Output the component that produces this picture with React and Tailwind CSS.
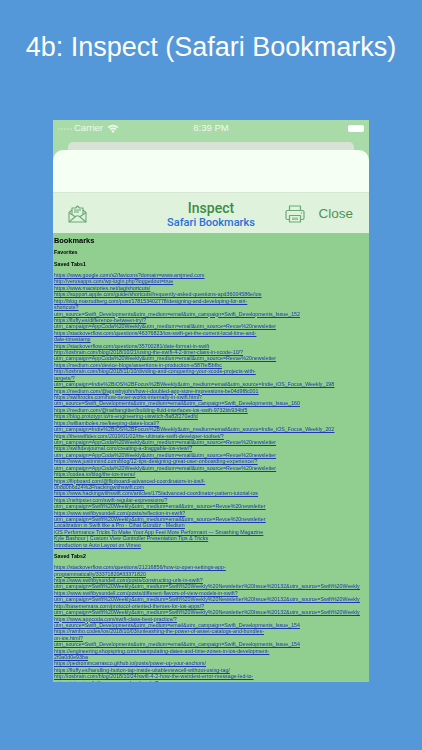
import React from 'react';

const APPCODA = 'utm_campaign=AppCoda%20Weekly&utm_medium=email&utm_source=Revue%20newsletter';
const SWIFT_WEEKLY = 'utm_campaign=Swift%20Weekly&utm_medium=email&utm_source=Revue%20newsletter';
const SWIFT_132 = 'utm_campaign=Swift%20Weekly&utm_medium=Swift%20Weekly%20Newsletter%20Issue%20132&utm_source=Swift%20Weekly';
const DEV_154 = 'utm_source=Swift_Developments&utm_medium=email&utm_campaign=Swift_Developments_Issue_154';

const savedTabs1 = [
  'https://www.google.com/s2/favicons?domain=www.amjmed.com',
  'http://verusapps.com/wp-login.php?loggedout=true',
  'https://www.macstories.net/tag/shortcuts/',
  'https://support.apple.com/guide/shortcuts/frequently-asked-questions-apd36004586e/ios',
  'http://blog.maxrudberg.com/post/178153402778/designing-and-developing-for-siri-',
  'shortcuts?',
  'utm_source=Swift_Developments&utm_medium=email&utm_campaign=Swift_Developments_Issue_152',
  'https://fluffy.es/difference-between-try/?',
  APPCODA,
  'https://stackoverflow.com/questions/46376823/ios-swift-get-the-current-local-time-and-',
  'date-timestamp',
  'https://stackoverflow.com/questions/35700281/date-format-in-swift',
  'http://iosbrain.com/blog/2018/10/21/using-the-swift-4-2-timer-class-in-xcode-10/?',
  APPCODA,
  'https://medium.com/device-blogs/assertions-in-production-e587fef5bfbc',
  'http://iosbrain.com/blog/2018/11/10/dividing-and-conquering-your-xcode-projects-with-',
  'targets/?',
  'utm_campaign=Indie%2BiOS%2BFocus%2BWeekly&utm_medium=email&utm_source=Indie_iOS_Focus_Weekly_198',
  'https://medium.com/@appsbyjohn/how-i-doubled-app-store-impressions-be04d9f8c001',
  'https://swiftrocks.com/how-never-works-internally-in-swift.html?',
  'utm_source=Swift_Developments&utm_medium=email&utm_campaign=Swift_Developments_Issue_160',
  'https://medium.com/@nathangitter/building-fluid-interfaces-ios-swift-9732bb934bf5',
  'https://blog.prototypr.io/rs-engineering-uiswitch-8a82f270edfd',
  'https://williamboles.me/keeping-dates-local/?',
  'utm_campaign=Indie%2BiOS%2BFocus%2BWeekly&utm_medium=email&utm_source=Indie_iOS_Focus_Weekly_202',
  'https://theswiftdev.com/2019/01/02/the-ultimate-swift-developer-toolset/?',
  APPCODA,
  'https://swiftdevjournal.com/creating-a-draggable-ios-view/?',
  APPCODA,
  'https://www.justinmind.com/blog/12-tips-designing-great-user-onboarding-experience/?',
  APPCODA,
  'https://codea.io/blog/the-ios-menu/',
  'https://flipboard.com/@flipboard/-advanced-coordinators-in-ios/f-',
  '0b8d0b6d24%2Fhackingwithswift.com',
  'https://www.hackingwithswift.com/articles/175/advanced-coordinator-pattern-tutorial-ios',
  'https://nshipster.com/swift-regular-expressions/?',
  SWIFT_WEEKLY,
  'https://www.swiftbysundell.com/posts/reflection-in-swift?',
  SWIFT_WEEKLY,
  'Localization in Swift like a Pro - Cihat Gündüz - Medium',
  'iOS Performance Tricks To Make Your App Feel More Performant — Smashing Magazine',
  'Kyle Bashour | Custom View Controller Presentation Tips & Tricks',
  'Introduction to Auto Layout on Vimeo',
];

const savedTabs2 = [
  'https://stackoverflow.com/questions/21216856/how-to-open-settings-app-',
  'programmatically/33371820#33371820',
  'https://www.swiftbysundell.com/posts/constructing-urls-in-swift?',
  SWIFT_132,
  'https://www.swiftbysundell.com/posts/different-flavors-of-view-models-in-swift?',
  SWIFT_132,
  'http://basememara.com/protocol-oriented-themes-for-ios-apps/?',
  SWIFT_132,
  'https://www.appcoda.com/swift-class-best-practice/?',
  DEV_154,
  'https://rambo.codes/ios/2018/10/03/unleashing-the-power-of-asset-catalogs-and-bundles-',
  'on-ios.html?',
  DEV_154,
  'https://engineering.shopspring.com/manipulating-dates-and-time-zones-in-ios-development-',
  '2f0a0d0e93ba',
  'https://pedrommcarrasco.github.io/posts/power-up-your-anchors/',
  'https://fluffy.es/handling-button-tap-inside-uitableviewcell-without-using-tag/',
  'http://iosbrain.com/blog/2018/10/24/swift-4-2-how-the-weirdest-error-message-led-to-',
  'reimagining-implicitly-unwrapped-optionals/?',
];

function LinkList({ lines }) {
  return (
    <div className="flex flex-col text-[5.3px] leading-[6.42px] text-[#1f35b4] underline whitespace-nowrap">
      {lines.map((line, i) => (
        <a key={i}>{line}</a>
      ))}
    </div>
  );
}

function MailIcon() {
  return (
    <svg viewBox="0 0 19 18" className="w-[19px] h-[18px] text-[#6ba877]" fill="none" stroke="currentColor" strokeWidth="1.1" strokeLinejoin="round">
      <path d="M1 7.5 V17 H18 V7.5 L15 5 M4 5 L1 7.5" />
      <path d="M4 9.5 V3 H7.5 L9.5 1 L11.5 3 H15 V9.5" />
      <path d="M6 5 H13 M6 7 H11" />
      <path d="M1 7.5 L7.5 12 M18 7.5 L11.5 12 M1 17 L7.5 11.5 Q9.5 10 11.5 11.5 L18 17" />
    </svg>
  );
}

function PrinterIcon() {
  return (
    <svg viewBox="0 0 20 18" className="w-5 h-[18px] text-[#6ba877]" fill="none" stroke="currentColor" strokeWidth="1.2" strokeLinejoin="round">
      <path d="M4.5 5.5 V1 H15.5 V5.5" />
      <path d="M4 14.5 H2.5 Q1 14.5 1 13 V7 Q1 5.5 2.5 5.5 H17.5 Q19 5.5 19 7 V13 Q19 14.5 17.5 14.5 H16" />
      <path d="M4.5 10.5 H15.5 V17 H4.5 Z" />
      <path d="M7 12.5 H13 V15 H7 Z" fill="currentColor" opacity="0.6" stroke="none" />
      <circle cx="16.5" cy="8" r="0.7" fill="currentColor" stroke="none" />
    </svg>
  );
}

function WifiIcon() {
  return (
    <svg viewBox="0 0 12 9" className="w-3 h-[9px] text-[#eef8ee]" fill="currentColor">
      <path d="M6 9 L4.2 6.9 Q6 5.5 7.8 6.9 Z" />
      <path d="M3.5 6.1 L2.5 4.9 Q6 2.2 9.5 4.9 L8.5 6.1 Q6 4.2 3.5 6.1 Z" />
      <path d="M1.8 4.2 L0.6 2.9 Q6 -1.3 11.4 2.9 L10.2 4.2 Q6 0.9 1.8 4.2 Z" />
    </svg>
  );
}

export default function App() {
  return (
    <div className="w-[422px] h-[750px] overflow-hidden bg-[#5498da] font-['Liberation_Sans',Arial,sans-serif]">
      <h1 className="pt-[31px] h-[120px] text-center text-[27px] leading-[32px] text-white whitespace-nowrap">
        4b: Inspect (Safari Bookmarks)
      </h1>

      <div className="mx-[53px] w-[316px] h-[562px] overflow-hidden bg-[#a9dba9] flex flex-col">
        <div className="h-[15px] mt-[1px] px-1 flex items-center justify-between text-[9.5px] text-[#eef8ee]">
          <div className="flex items-center w-[110px]">
            <span className="flex gap-[1px] ml-[1px] mr-[2px]">
              {[0, 1, 2, 3, 4].map((d) => (
                <span key={d} className="w-[2px] h-[2px] rounded-full bg-[#c5e6c5]" />
              ))}
            </span>
            <span className="mr-1">Carrier</span>
            <WifiIcon />
          </div>
          <span>8:39 PM</span>
          <div className="w-[110px] flex justify-end pr-[1px]">
            <span className="w-[16px] h-[7px] rounded-[2px] bg-white" />
          </div>
        </div>

        <div className="mt-[6px] mx-[15px] h-[8px] shrink-0 rounded-t-[5px] bg-[#d8e2d5]" />

        <div className="h-[43px] shrink-0 rounded-t-[10px] bg-[#f5fff4] border-b border-[#d5e6d2]" />

        <div className="h-[40px] shrink-0 grid grid-cols-3 items-center bg-[#dff3dc] pl-[15px] pr-4">
          <div className="flex items-center mt-[1px]">
            <MailIcon />
          </div>
          <div className="flex flex-col items-center whitespace-nowrap pl-[1px] mt-[3px] font-['Roboto',sans-serif] font-medium">
            <span className="text-[14px] leading-[16px] text-[#3f8a47]">Inspect</span>
            <span className="text-[11px] leading-[13px] text-[#2a6fd8]">Safari Bookmarks</span>
          </div>
          <div className="flex items-center justify-end gap-[13px] mt-[2px]">
            <PrinterIcon />
            <span className="text-[13.5px] leading-[16px] text-[#4f9159]">Close</span>
          </div>
        </div>

        <div className="flex-1 min-h-0 overflow-hidden bg-[#90cf90] pl-[1px] pt-[3px] text-black">
          <div className="blur-[0.3px]">
            <p className="text-[7.4px] leading-[9px] font-bold">Bookmarks</p>
            <p className="mt-[4px] text-[5.3px] leading-[7px] font-bold">Favorites</p>
            <p className="mt-[5px] mb-[4px] text-[5.3px] leading-[7px] font-bold">Saved Tabs1</p>
            <LinkList lines={savedTabs1} />
            <p className="mt-[5px] mb-[4px] text-[5.3px] leading-[7px] font-bold">Saved Tabs2</p>
            <LinkList lines={savedTabs2} />
          </div>
        </div>
      </div>
    </div>
  );
}
